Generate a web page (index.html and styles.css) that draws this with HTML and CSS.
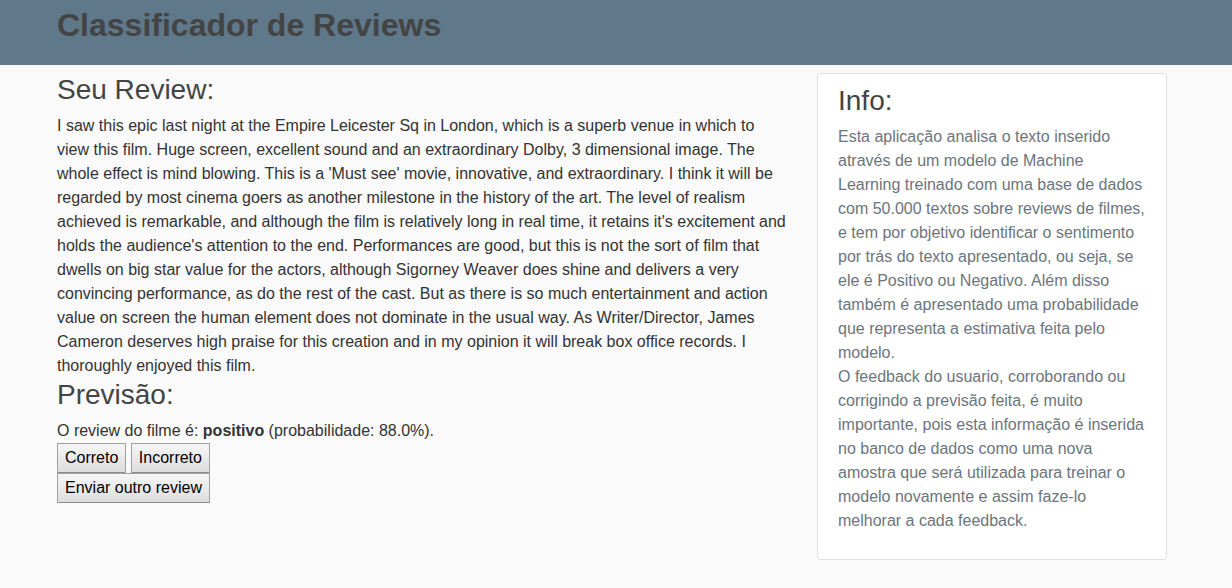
FILE: index.html
```html
<!DOCTYPE html>
<html lang="pt-BR">
<head>
<meta charset="utf-8">
<title>Classificador de Reviews</title>
<link rel="stylesheet" href="styles.css">
</head>
<body>
<header class="masthead">
  <div class="container"><h1 class="title">Classificador de Reviews</h1></div>
</header>
<main class="page">
  <div class="container columns">
  <section class="content">
    <h2 class="heading">Seu Review:</h2>
    <div class="review">I saw this epic last night at the Empire Leicester Sq in London, which is a superb venue in which to view this film. Huge screen, excellent sound and an extraordinary Dolby, 3 dimensional image. The whole effect is mind blowing. This is a 'Must see' movie, innovative, and extraordinary. I think it will be regarded by most cinema goers as another milestone in the history of the art. The level of realism achieved is remarkable, and although the film is relatively long in real time, it retains it's excitement and holds the audience's attention to the end. Performances are good, but this is not the sort of film that dwells on big star value for the actors, although Sigorney Weaver does shine and delivers a very convincing performance, as do the rest of the cast. But as there is so much entertainment and action value on screen the human element does not dominate in the usual way. As Writer/Director, James Cameron deserves high praise for this creation and in my opinion it will break box office records. I thoroughly enjoyed this film.</div>
    <h2 class="heading">Previsão:</h2>
    <div>O review do filme é: <strong>positivo</strong> (probabilidade: 88.0%).</div>
    <form class="actions">
      <button type="button" class="button">Correto</button>
      <button type="button" class="button">Incorreto</button>
    </form>
    <form class="actions">
      <button type="button" class="button">Enviar outro review</button>
    </form>
  </section>
  <aside class="info">
    <h2 class="heading">Info:</h2>
    <p class="info-text">Esta aplicação analisa o texto inserido através de um modelo de Machine Learning treinado com uma base de dados com 50.000 textos sobre reviews de filmes, e tem por objetivo identificar o sentimento por trás do texto apresentado, ou seja, se ele é Positivo ou Negativo. Além disso também é apresentado uma probabilidade que representa a estimativa feita pelo modelo.<br>O feedback do usuario, corroborando ou corrigindo a previsão feita, é muito importante, pois esta informação é inserida no banco de dados como uma nova amostra que será utilizada para treinar o modelo novamente e assim faze-lo melhorar a cada feedback.</p>
  </aside>
  </div>
</main>
</body>
</html>
```

FILE: styles.css
```css
* {
  box-sizing: border-box;
}

body {
  margin: 0;
  background: #fafafa;
  color: #333333;
  font-family: "Liberation Sans", Arial, sans-serif;
  font-size: 16px;
  line-height: 24px;
}

.masthead {
  padding: 6px 8px 20px 0;
  background: #5f788a;
}

.page {
  padding: 8px 8px 0 0;
}

.container {
  max-width: 1140px;
  margin: 0 auto;
  padding: 0 15px;
}

.title {
  margin: 0;
  color: #444444;
  font-size: 32px;
  line-height: 39px;
}

.columns {
  display: grid;
  grid-template-columns: minmax(0, 730px) minmax(0, 350px);
  justify-content: space-between;
  align-items: start;
}

.heading {
  margin: 0 0 8px;
  color: #444444;
  font-size: 28px;
  font-weight: 400;
  line-height: 33px;
}

.button {
  height: 30px;
  padding: 0 7px;
  border: 1px solid #a0a0a0;
  border-bottom-color: #8c8c8c;
  border-radius: 1px;
  background: linear-gradient(#f6f6f6, #dddddd);
  color: #000000;
  font: inherit;
  vertical-align: top;
}

.info {
  padding: 10px 20px 26px;
  border: 1px solid #dfdfdf;
  border-radius: 4px;
  background: #ffffff;
}

.info-text {
  margin: 0;
  color: #6c757d;
}
```
